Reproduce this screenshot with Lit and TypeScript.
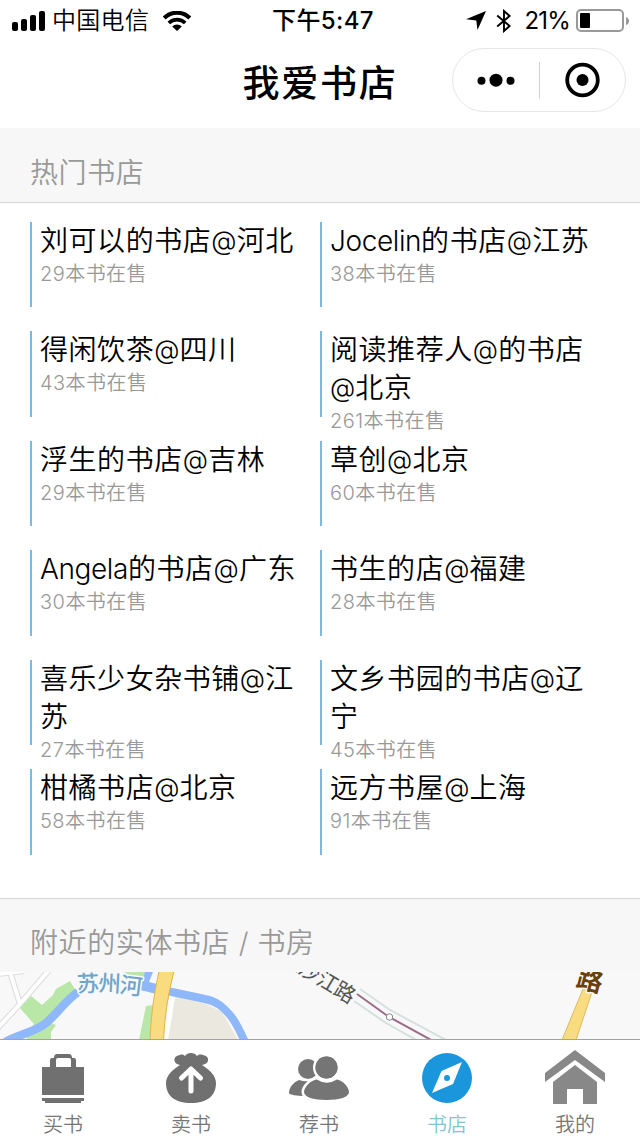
import { LitElement, html, css, svg } from "lit";
import { customElement, property } from "lit/decorators.js";
import { classMap } from "lit/directives/class-map.js";

interface Shop {
  name: string;
  count: number;
}

const SHOPS: Shop[] = [
  { name: "刘可以的书店@河北", count: 29 },
  { name: "Jocelin的书店@江苏", count: 38 },
  { name: "得闲饮茶@四川", count: 43 },
  { name: "阅读推荐人@的书店@北京", count: 261 },
  { name: "浮生的书店@吉林", count: 29 },
  { name: "草创@北京", count: 60 },
  { name: "Angela的书店@广东", count: 30 },
  { name: "书生的店@福建", count: 28 },
  { name: "喜乐少女杂书铺@江苏", count: 27 },
  { name: "文乡书园的书店@辽宁", count: 45 },
  { name: "柑橘书店@北京", count: 58 },
  { name: "远方书屋@上海", count: 91 },
];

// Latin words and the @ sign are tracked tighter than the Chinese around them.
const runs = (text: string) =>
  text
    .split(/([A-Za-z]+|@)/)
    .filter((part) => part !== "")
    .map((part) =>
      part === "@"
        ? html`<span class="at">@</span>`
        : /^[A-Za-z]/.test(part)
          ? html`<span class="latin">${part}</span>`
          : part
    );

@customElement("status-bar")
export class StatusBar extends LitElement {
  static styles = css`
    :host {
      display: grid;
      grid-template-columns: 1fr auto 1fr;
      align-items: center;
      box-sizing: border-box;
      height: 41px;
      padding: 1px 11px 0 12px;
      font-size: 24px;
      line-height: 30px;
      color: #000;
    }
    .left,
    .right {
      display: flex;
      align-items: center;
    }
    .right {
      justify-content: flex-end;
    }
    .carrier {
      margin: 0 14px 0 6px;
      letter-spacing: 0.3px;
      font-weight: 350;
    }
    .time {
      font-weight: 500;
      letter-spacing: 0.4px;
      padding-left: 5px;
    }
    .percent {
      margin: 0 6px 0 12px;
      font-size: 24px;
      letter-spacing: -0.8px;
      font-weight: 400;
    }
    .bluetooth {
      margin-left: 10px;
    }
    svg {
      display: block;
      flex: none;
    }
  `;
  render() {
    return html`
      <div class="left">
        <svg width="34" height="20" viewBox="0 0 34 20">
          <rect x="0" y="11" width="6" height="9" rx="2" />
          <rect x="9" y="8" width="6" height="12" rx="2" />
          <rect x="18" y="4" width="6" height="16" rx="2" />
          <rect x="27" y="0" width="6" height="20" rx="2" />
        </svg>
        <span class="carrier">中国电信</span>
        <svg width="28" height="20" viewBox="0 0 28 20">
          <g fill="none" stroke="#000" stroke-width="4">
            <path d="M1.200 7A18 18 0 0 1 26.800 7" />
            <path d="M5.800 12A11.700 11.700 0 0 1 22.200 12" stroke-width="3.600" />
          </g>
          <path d="M9.200 15.600A6.800 6.800 0 0 1 18.800 15.600L14 20Z" />
        </svg>
      </div>
      <span class="time">下午5:47</span>
      <div class="right">
        <svg width="20" height="19" viewBox="0 0 20 19">
          <path d="M20 0L11.500 19L10.300 9.600L0 8.200Z" />
        </svg>
        <svg class="bluetooth" width="16" height="24" viewBox="0 0 16 24">
          <path
            d="M1.200 6.500L13.600 17L8 22V2L13.600 7L1.200 17.500"
            fill="none"
            stroke="#000"
            stroke-width="1.900"
          />
        </svg>
        <span class="percent">21%</span>
        <svg width="53" height="24" viewBox="0 0 53 24">
          <rect x="1" y="1" width="46" height="21" rx="4" fill="none" stroke="#999" stroke-width="2" />
          <rect x="4" y="4" width="10" height="15" rx="1" />
          <path d="M50 8Q53 9 53 12T50 16Z" fill="#999" />
        </svg>
      </div>
    `;
  }
}

@customElement("nav-bar")
export class NavBar extends LitElement {
  @property() heading = "";
  static styles = css`
    :host {
      display: grid;
      grid-template-columns: 1fr auto 1fr;
      align-items: center;
      height: 87px;
      padding-right: 14px;
      padding-left: 14px;
      box-sizing: border-box;
    }
    .title {
      grid-column: 2;
      font-size: 37px;
      line-height: 48px;
      font-weight: 500;
      letter-spacing: 1.8px;
      margin-top: -1px;
    }
    .capsule {
      justify-self: end;
      display: flex;
      align-items: center;
      width: 172px;
      height: 62px;
      margin-top: -8px;
      border: 1px solid #e6e6e6;
      border-radius: 32px;
    }
    .half {
      flex: 1;
      display: flex;
      justify-content: center;
    }
    .divider {
      width: 1px;
      height: 37px;
      background: #d0d0d0;
    }
  `;
  render() {
    return html`
      <span class="title">${this.heading}</span>
      <div class="capsule">
        <div class="half">
          <svg width="39" height="14" viewBox="0 0 39 14">
            <circle cx="5.500" cy="7.800" r="4" />
            <circle cx="20" cy="7.200" r="6.500" />
            <circle cx="34.500" cy="7.800" r="4" />
          </svg>
        </div>
        <div class="divider"></div>
        <div class="half">
          <svg width="36" height="36" viewBox="0 0 36 36">
            <circle cx="18.500" cy="18" r="15.300" fill="none" stroke="#000" stroke-width="3.800" />
            <circle cx="18.500" cy="18" r="6" />
          </svg>
        </div>
      </div>
    `;
  }
}

@customElement("shop-list")
export class ShopList extends LitElement {
  static styles = css`
    :host {
      display: grid;
      grid-template-columns: 290px 290px;
      grid-auto-rows: 85.5px;
      row-gap: 24px;
      padding: 19px 30px 43.5px;
    }
    .shop {
      box-sizing: border-box;
      border-left: 2px solid #7cbae4;
      padding: 0 20px 0 8px;
    }
    .name {
      font-size: 28px;
      line-height: 38px;
      letter-spacing: 0.55px;
      font-weight: 350;
      color: #000;
      word-break: break-all;
    }
    .latin {
      letter-spacing: -0.4px;
    }
    .at {
      font-size: 26px;
      letter-spacing: 0.1px;
      line-height: 1;
      vertical-align: 1px;
    }
    .count {
      padding-top: 1px;
      font-size: 20px;
      line-height: 27px;
      letter-spacing: 0.45px;
      font-weight: 350;
      color: #999;
    }
  `;
  render() {
    return SHOPS.map(
      (shop) => html`
        <div class="shop">
          <div class="name">${runs(shop.name)}</div>
          <div class="count">${shop.count}本书在售</div>
        </div>
      `
    );
  }
}

@customElement("nearby-map")
export class NearbyMap extends LitElement {
  static styles = css`
    :host {
      display: block;
      height: 67px;
      overflow: hidden;
    }
    svg {
      display: block;
    }
  `;
  render() {
    return html`
      <svg width="640" height="67" viewBox="0 0 640 67">
        <rect width="640" height="67" fill="#f8f8f8" />
        <g fill="none" stroke="#dcdcdc" stroke-width="6">
          <path d="M-2 2L24 -1M10 0L20 32M-4 58L20 32L50 -3" />
        </g>
        <g fill="none" stroke="#fff" stroke-width="4">
          <path d="M-2 2L24 -1M10 0L20 32M-4 58L20 32L50 -3" />
        </g>
        <path
          d="M20 36L31 24L42 33L53 23L56 17L70 9L76 19L48 50L56 53L51 60V68H27V62L34 52Z"
          fill="#b8e7a8"
        />
        <path d="M124 0H147L146 16L136 8Z" fill="#b8e7a8" />
        <path d="M146 34L154 33L150 68H139Z" fill="#b8e7a8" />
        <path d="M174 24L204 31L222 40L238 68H167Z" fill="#ebe9df" />
        <path d="M173 25L166 68" stroke="#fff" stroke-width="4" />
        <path
          d="M4 71C18 62 34 61 46 51C56 43 66 28 78 20"
          fill="none"
          stroke="#8fb8fb"
          stroke-width="8.500"
        />
        <path d="M145 0H153L149 10L157 12V22L140 18Z" fill="#8fb8fb" />
        <path
          d="M150 16L172 20L205 27C217 29 224 36 230 43C236 50 240 59 245 70"
          fill="none"
          stroke="#8fb8fb"
          stroke-width="8"
        />
        <path d="M159 -1H174Q165 33 163.500 68H150Q151 35 159 -1Z" fill="#f9dc80" stroke="#e0b54a" />
        <g fill="none" stroke="#d5e1df" stroke-width="2">
          <path d="M360 17L390 38L446 68" />
          <path d="M354 29L386 51L418 69" />
        </g>
        <path d="M357 22L389 45L433 69" fill="none" stroke="#9b6b87" stroke-width="2" />
        <circle cx="389.500" cy="45" r="3.200" fill="#fff" stroke="#888" />
        <path d="M583 17L562 68H576L592 20Z" fill="#f9dc80" stroke="#dcb962" />
        <g paint-order="stroke" stroke="#f8f8f8" stroke-width="3" stroke-linejoin="round">
          <g font-size="22.500" fill="#6fa5cb" font-weight="500">
            <text transform="translate(77 20) rotate(-2)">苏</text>
            <text transform="translate(98 19) rotate(3)">州</text>
            <text transform="translate(119 20.500) rotate(7)">河</text>
          </g>
          <g font-size="21" fill="#555">
            <text transform="translate(281 -10) rotate(31)">金</text>
            <text transform="translate(297 0) rotate(31)">沙</text>
            <text transform="translate(315 11) rotate(31)">江</text>
            <text transform="translate(332 21.500) rotate(31)">路</text>
          </g>
          <text transform="translate(575 14) rotate(15)" font-size="26" font-weight="600" fill="#694006">
            路
          </text>
        </g>
      </svg>
    `;
  }
}

const ICONS = {
  buy: svg`<g fill="#707070">
      <path d="M4 15H12V8Q12 6 14 6H16Q16 2 19 2H31Q34 2 34 6H36Q38 6 38 8V15H46V43H4ZM18 15H33V8Q33 6 31 6H20Q18 6 18 8Z" />
      <path d="M4 46H46V49H43V51H7V49H4Z" />
    </g>`,
  sell: svg`<path
        d="M14 13C7 12 6 4 14 3C16 2 18 3 19 4C21 0 29 0 31 4C32 3 34 2 37 3C44 4 44 12 36 13C44 18 50 24 50 31C50 44 41 51 25 51S0 44 0 31C0 24 6 18 14 13Z"
        fill="#707070"
      />
      <path
        d="M15.500 26L25 17L34.500 26M25 17V39"
        fill="none"
        stroke="#fff"
        stroke-width="5"
        stroke-linecap="round"
        stroke-linejoin="round"
      />`,
  recommend: svg`<g fill="#757575">
      <circle cx="14" cy="17" r="10" />
      <path d="M-5 41C-5 35 0 30 5 28Q11 30 17 29L10 44C4 44 -5 43 -5 41Z" />
      <g stroke="#fff" stroke-width="5" paint-order="stroke">
        <circle cx="32.500" cy="15.500" r="11" />
        <path d="M10 40C10 35 17 28 23 27.500Q32.500 34 43 27.500C50 29 55 36 55 40C55 45 46 48 32.500 48S10 45 10 40Z" />
      </g>
      <circle cx="32.500" cy="15.500" r="11" />
    </g>`,
  shops: svg`<circle cx="25" cy="26" r="25" fill="#1a96dc" />
      <path d="M40 10L31 32L10 41L19.500 19Z" fill="#fff" />
      <circle cx="25" cy="26" r="3" fill="#1a96dc" />`,
  mine: svg`<g fill="#888">
      <path d="M25 -2L55 21V30L25 8L-5 30V21Z" />
      <path d="M25 13L47 30V52H33V37H17V52H3V30Z" />
    </g>`,
};

const TABS = [
  { icon: ICONS.buy, label: "买书", active: false },
  { icon: ICONS.sell, label: "卖书", active: false },
  { icon: ICONS.recommend, label: "荐书", active: false },
  { icon: ICONS.shops, label: "书店", active: true },
  { icon: ICONS.mine, label: "我的", active: false },
];

@customElement("tab-bar")
export class TabBar extends LitElement {
  static styles = css`
    :host {
      display: flex;
      box-sizing: border-box;
      height: 97px;
      border-top: 1px solid #a3a3a3;
      background: #fff;
    }
    .tab {
      flex: 0 0 128px;
      display: flex;
      flex-direction: column;
      align-items: center;
      box-sizing: border-box;
      padding: 12px 2px 0 0;
      font-size: 20px;
      line-height: 26px;
      font-weight: 350;
      color: #777;
    }
    .active {
      color: #83c5cf;
    }
    svg {
      display: block;
      flex: none;
      overflow: visible;
      margin-bottom: 8px;
    }
  `;
  render() {
    return TABS.map(
      (tab) => html`
        <div class=${classMap({ tab: true, active: tab.active })}>
          <svg width="50" height="52" viewBox="0 0 50 52">${tab.icon}</svg>
          <span>${tab.label}</span>
        </div>
      `
    );
  }
}

@customElement("app-root")
export class AppRoot extends LitElement {
  static styles = css`
    :host {
      display: flex;
      flex-direction: column;
      width: 640px;
      height: 1136px;
      overflow: hidden;
      background: #fff;
      font-family: Inter, "Noto Sans CJK SC", sans-serif;
    }
    .section {
      flex: none;
      box-sizing: border-box;
      padding: 26px 30px 0;
      background: #f7f7f7;
      color: #999;
      font-size: 28px;
      line-height: 38px;
      letter-spacing: 0.6px;
      font-weight: 350;
    }
    .hot {
      height: 75px;
      border-bottom: 1px solid #d5d5d5;
    }
    .nearby {
      height: 74px;
      padding-top: 25px;
      border-top: 1px solid #d5d5d5;
    }
  `;
  render() {
    return html`
      <status-bar></status-bar>
      <nav-bar heading="我爱书店"></nav-bar>
      <div class="section hot">热门书店</div>
      <shop-list></shop-list>
      <div class="section nearby">附近的实体书店 / 书房</div>
      <nearby-map></nearby-map>
      <tab-bar></tab-bar>
    `;
  }
}
